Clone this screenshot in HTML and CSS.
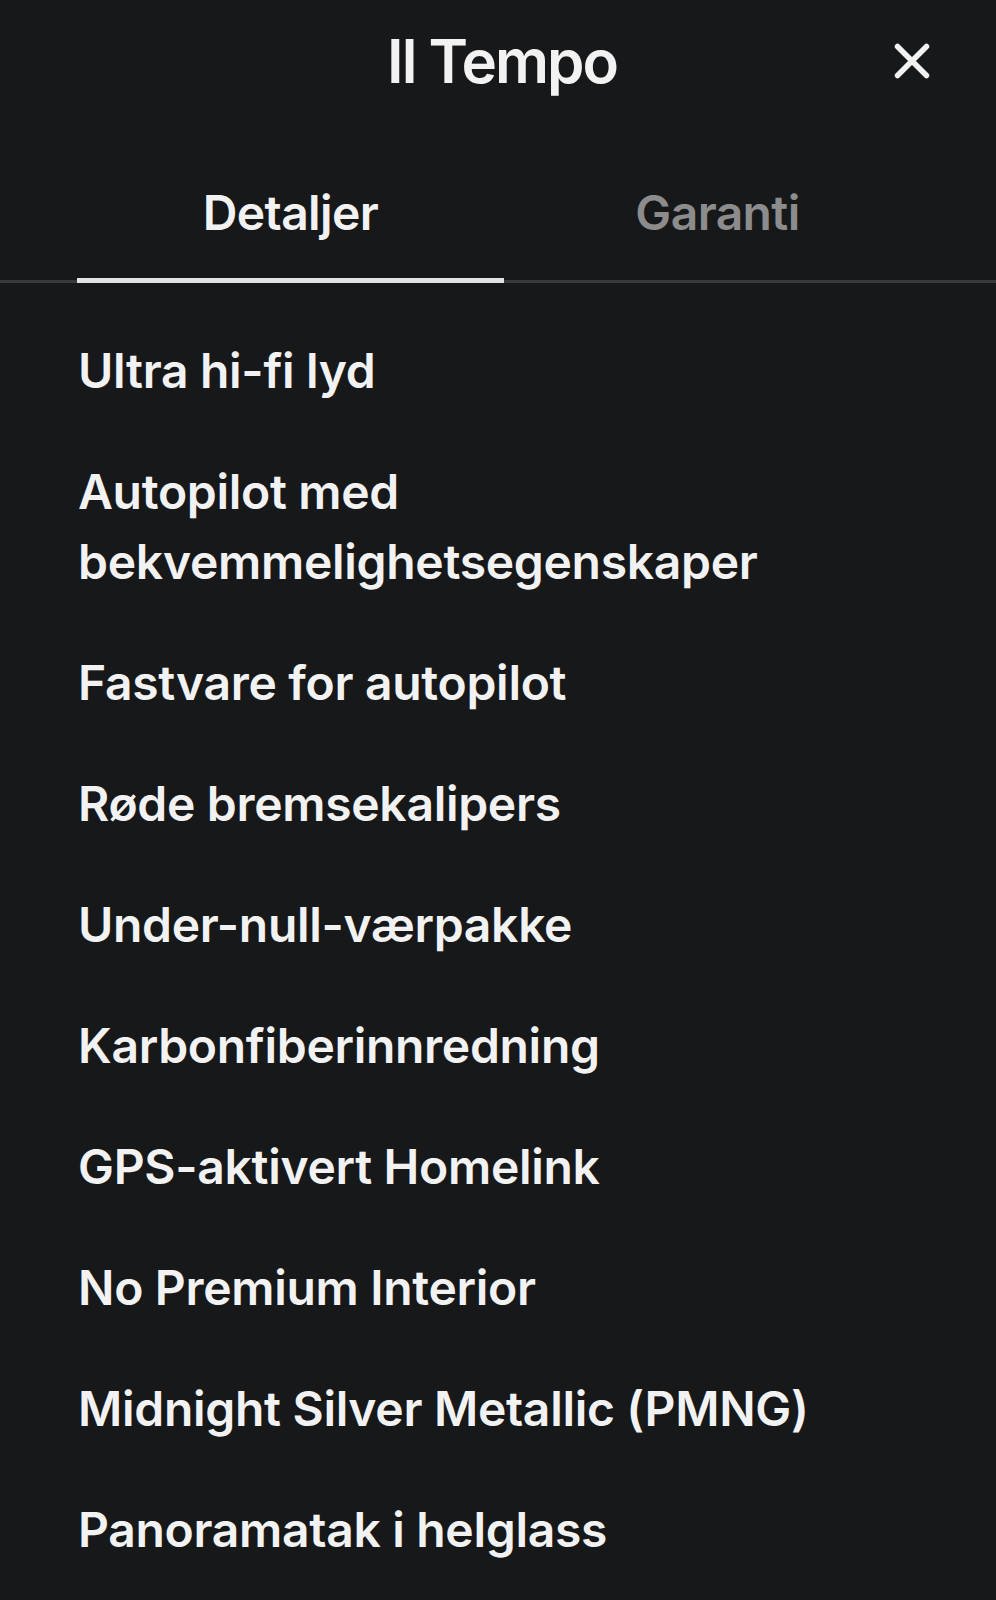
FILE: index.html
```html
<!DOCTYPE html>
<html lang="no">
<head>
<meta charset="utf-8">
<title>Il Tempo</title>
<link rel="stylesheet" href="styles.css">
</head>
<body>
<div class="sheet">
  <header class="topbar">
    <h1 class="title">Il Tempo</h1>
    <button class="close" aria-label="Lukk">
      <svg viewBox="0 0 36 36" width="36" height="36"><path d="M3.5 3.5 L32.5 32.5 M32.5 3.5 L3.5 32.5" stroke="#f2f2f2" stroke-width="5.5" stroke-linecap="round" fill="none"/></svg>
    </button>
  </header>
  <nav class="tabs">
    <div class="tab active">Detaljer</div>
    <div class="tab">Garanti</div>
  </nav>
  <ul class="features">
    <li>Ultra hi-fi lyd</li>
    <li>Autopilot med bekvemmelighetsegenskaper</li>
    <li>Fastvare for autopilot</li>
    <li>Røde bremsekalipers</li>
    <li>Under-null-værpakke</li>
    <li>Karbonfiberinnredning</li>
    <li>GPS-aktivert Homelink</li>
    <li>No Premium Interior</li>
    <li>Midnight Silver Metallic (PMNG)</li>
    <li>Panoramatak i helglass</li>
  </ul>
</div>
</body>
</html>
```
FILE: styles.css
```css
* { box-sizing: border-box; }
html, body { margin: 0; padding: 0; }
body {
  background: #17181a;
  color: #f2f2f2;
  font-family: Inter, "Noto Sans", sans-serif;
  width: 996px;
  min-height: 1600px;
}
.sheet { display: flex; flex-direction: column; }
.topbar {
  position: relative;
  height: 122px;
  display: flex;
  align-items: center;
  justify-content: center;
}
.title {
  margin: 0;
  font-size: 60px;
  font-weight: 600;
  letter-spacing: -2px;
  line-height: 1;
  padding-left: 8px;
}
.close {
  position: absolute;
  right: 66px;
  top: 43px;
  width: 36px;
  height: 36px;
  padding: 0;
  border: 0;
  background: none;
  display: block;
}
.close svg { display: block; }
.tabs {
  display: flex;
  padding-left: 77px;
  padding-right: 65px;
  border-bottom: 3px solid #38393b;
  margin-top: 61px;
}
.tab {
  flex: 1;
  text-align: center;
  font-size: 48px;
  font-weight: 600;
  letter-spacing: -0.6px;
  line-height: 60px;
  padding-bottom: 35px;
  color: #8c8c8c;
  margin-bottom: -3px;
  border-bottom: 5px solid transparent;
}
.tab.active {
  color: #f2f2f2;
  border-bottom-color: #e2e2e2;
}
.features {
  list-style: none;
  margin: 0;
  padding: 53px 60px 0 78px;
  display: flex;
  flex-direction: column;
  gap: 51px;
}
.features li {
  font-size: 48px;
  font-weight: 600;
  line-height: 70px;
  letter-spacing: -0.3px;
}
```
